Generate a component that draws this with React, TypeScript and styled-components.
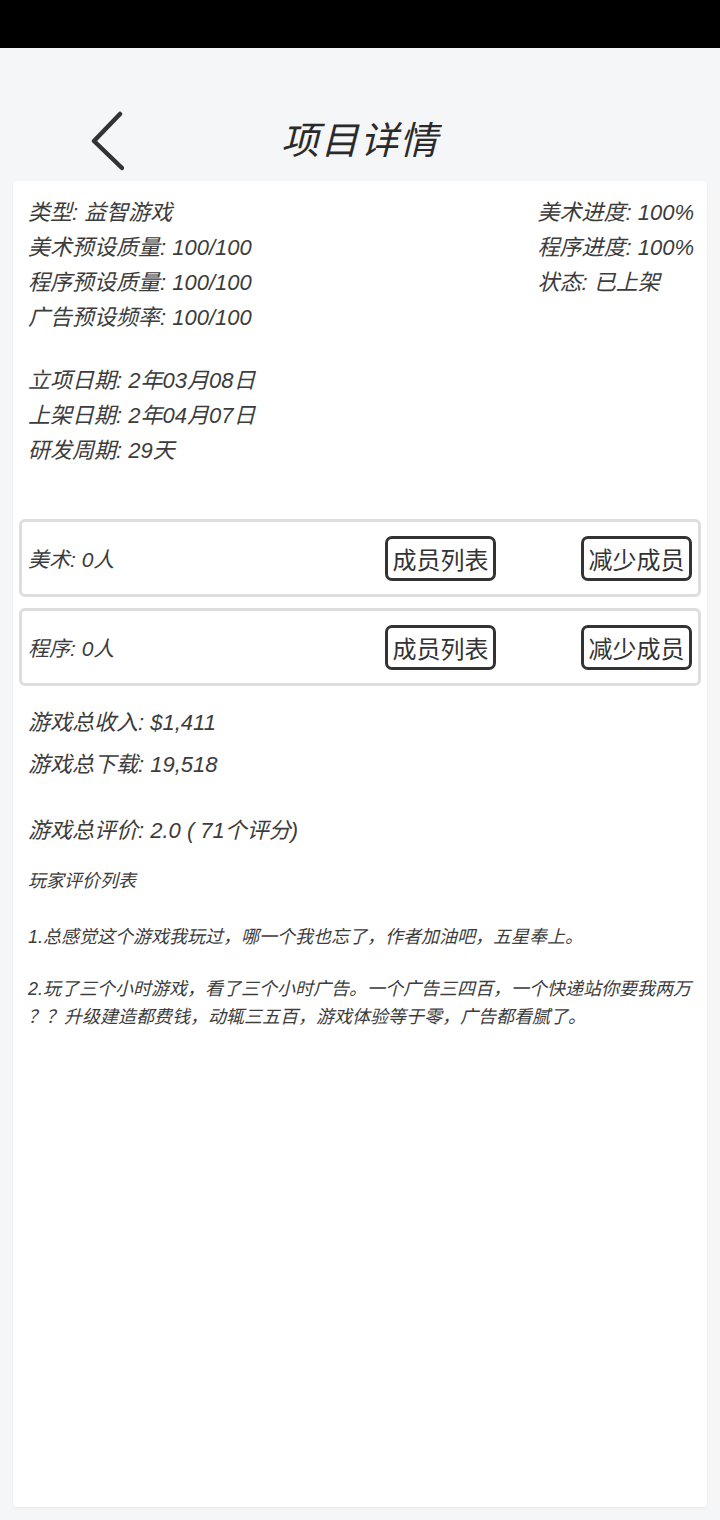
import React from "react";
import styled, { createGlobalStyle } from "styled-components";

const GlobalStyle = createGlobalStyle`
  html, body {
    margin: 0;
    padding: 0;
    background: #f5f6f8;
  }
  body {
    font-family: "Liberation Sans", "Noto Sans CJK SC", sans-serif;
    color: #3c3c3c;
  }
  * { box-sizing: border-box; }
`;

const Page = styled.div`
  min-height: 1520px;
  display: flex;
  flex-direction: column;
  background: #f5f6f8;
`;

const StatusBar = styled.div`
  height: 48px;
  background: #000;
  flex-shrink: 0;
`;

const Header = styled.header`
  height: 133px;
  padding-top: 52px;
  display: grid;
  grid-template-columns: 1fr auto 1fr;
  align-items: center;
  flex-shrink: 0;
`;

const BackButton = styled.button`
  justify-self: start;
  margin-left: 88px;
  padding: 0;
  border: none;
  background: none;
  display: flex;
  cursor: pointer;
`;

const Title = styled.h1`
  margin: 0;
  font-size: 38px;
  line-height: 54px;
  font-weight: 400;
  font-style: italic;
  color: #2a2a2a;
  letter-spacing: 1.5px;
`;

const Card = styled.main`
  flex: 1;
  margin: 0 13px 13px;
  background: #fff;
  border-radius: 4px;
  box-shadow: 0 1px 3px rgba(0, 0, 0, 0.06);
  padding: 14px 0 0;
`;

const InfoGrid = styled.section`
  display: flex;
  justify-content: space-between;
  padding: 0 13px 0 15px;
`;

const Column = styled.div`
  display: flex;
  flex-direction: column;
`;

const InfoLine = styled.div<{ $size?: number; $lh?: number }>`
  font-size: ${(p) => p.$size ?? 22}px;
  line-height: ${(p) => p.$lh ?? 35}px;
  font-style: italic;
  color: #3c3c3c;
  white-space: nowrap;
`;

const DateBlock = styled(Column)`
  margin-top: 28px;
  padding: 0 15px;
`;

const Teams = styled.section`
  margin-top: 51px;
  padding: 0 6px;
  display: flex;
  flex-direction: column;
  gap: 11px;
`;

const TeamRow = styled.div`
  height: 78px;
  border: 3px solid #dedede;
  border-radius: 6px;
  display: flex;
  align-items: center;
  padding: 0 6px;
`;

const TeamLabel = styled.span`
  flex: 1;
  font-size: 21px;
  font-style: italic;
  color: #3c3c3c;
`;

const Actions = styled.div`
  display: flex;
  gap: 85px;
`;

const OutlineButton = styled.button`
  width: 111px;
  height: 45px;
  border: 3px solid #333;
  border-radius: 7px;
  background: #fff;
  padding: 0;
  font-family: "Liberation Sans", "Noto Sans CJK SC", sans-serif;
  font-size: 24px;
  color: #333;
  cursor: pointer;
`;

const Stats = styled.section`
  padding: 0 15px;
  margin-top: 16px;
  display: flex;
  flex-direction: column;
`;

const RatingLine = styled(InfoLine)`
  margin-top: 24px;
`;

const SubHeading = styled.div`
  margin-top: 15px;
  font-size: 18px;
  line-height: 28px;
  font-style: italic;
  color: #3c3c3c;
`;

const Reviews = styled.ol`
  list-style: none;
  margin: 28px 0 0;
  padding: 0 8px 0 15px;
  display: flex;
  flex-direction: column;
  gap: 24px;
`;

const Review = styled.li`
  font-size: 18px;
  line-height: 28px;
  font-style: italic;
  color: #3c3c3c;
  line-break: anywhere;
`;

const ChevronLeft = () => (
  <svg width="36" height="60" viewBox="0 0 36 60" fill="none">
    <polyline
      points="32,3 6,30 34,57"
      stroke="#333"
      strokeWidth="4.5"
      strokeLinecap="round"
      strokeLinejoin="round"
    />
  </svg>
);

const presets = [
  "类型: 益智游戏",
  "美术预设质量: 100/100",
  "程序预设质量: 100/100",
  "广告预设频率: 100/100",
];

const progress = ["美术进度: 100%", "程序进度: 100%", "状态: 已上架"];

const dates = ["立项日期: 2年03月08日", "上架日期: 2年04月07日", "研发周期: 29天"];

const teams = ["美术: 0人", "程序: 0人"];

const reviews = [
  "1.总感觉这个游戏我玩过，哪一个我也忘了，作者加油吧，五星奉上。",
  "2.玩了三个小时游戏，看了三个小时广告。一个广告三四百，一个快递站你要我两万？？升级建造都费钱，动辄三五百，游戏体验等于零，广告都看腻了。",
];

export default function App() {
  return (
    <>
      <GlobalStyle />
      <Page>
        <StatusBar />
        <Header>
          <BackButton aria-label="返回">
            <ChevronLeft />
          </BackButton>
          <Title>项目详情</Title>
          <span />
        </Header>
        <Card>
          <InfoGrid>
            <Column>
              {presets.map((t) => (
                <InfoLine key={t}>{t}</InfoLine>
              ))}
            </Column>
            <Column>
              {progress.map((t) => (
                <InfoLine key={t}>{t}</InfoLine>
              ))}
            </Column>
          </InfoGrid>
          <DateBlock>
            {dates.map((t) => (
              <InfoLine key={t}>{t}</InfoLine>
            ))}
          </DateBlock>
          <Teams>
            {teams.map((t) => (
              <TeamRow key={t}>
                <TeamLabel>{t}</TeamLabel>
                <Actions>
                  <OutlineButton>成员列表</OutlineButton>
                  <OutlineButton>减少成员</OutlineButton>
                </Actions>
              </TeamRow>
            ))}
          </Teams>
          <Stats>
            <InfoLine $lh={42}>游戏总收入: $1,411</InfoLine>
            <InfoLine $lh={42}>游戏总下载: 19,518</InfoLine>
            <RatingLine $lh={42}>游戏总评价: 2.0 ( 71个评分)</RatingLine>
            <SubHeading>玩家评价列表</SubHeading>
          </Stats>
          <Reviews>
            {reviews.map((r) => (
              <Review key={r}>{r}</Review>
            ))}
          </Reviews>
        </Card>
      </Page>
    </>
  );
}
